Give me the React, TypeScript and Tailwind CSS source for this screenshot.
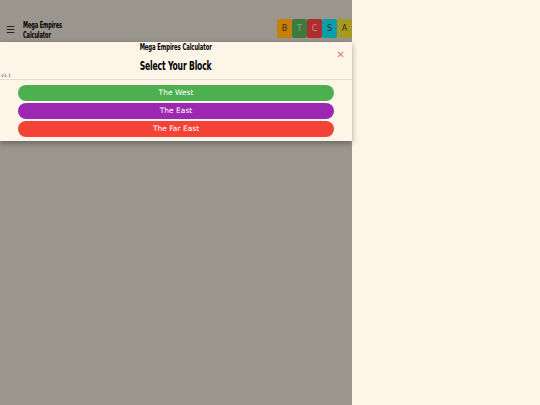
import React from "react";

const impact = {
  fontFamily: "Impact, 'Liberation Sans Narrow', 'DejaVu Sans Condensed', sans-serif",
  fontWeight: 700,
  letterSpacing: "-0.02em",
};

export default function App() {
  const badges = [
    { l: "B", bg: "bg-[#c5800c]", t: "text-[#3a2a10]" },
    { l: "T", bg: "bg-[#3c7a3d]", t: "text-[#7fa880]" },
    { l: "C", bg: "bg-[#ad2e2c]", t: "text-[#d98a86]" },
    { l: "S", bg: "bg-[#0d9fa9]", t: "text-[#0f2f33]" },
    { l: "A", bg: "bg-[#a69b22]", t: "text-[#2f2c10]" },
  ];
  const blocks = [
    { n: "The West", bg: "bg-[#4caf50]" },
    { n: "The East", bg: "bg-[#9c27b0]" },
    { n: "The Far East", bg: "bg-[#f44336]" },
  ];
  return (
    <div className="min-h-[405px] w-[540px] bg-[#fdf5e8]" style={{ fontFamily: "'DejaVu Sans', sans-serif" }}>
      <div className="relative h-[405px] w-[352px] bg-[#9a958d]">
        <header className="flex h-[42px] items-end justify-between pb-[2px]">
          <div className="flex items-center gap-[8px] pl-[6px]">
            <span className="mb-[1px] text-[10px] leading-none text-[#222]">☰</span>
            <div className="origin-left scale-x-[0.66] text-[8.5px] leading-[10px] text-black" style={impact}>
              <div>Mega Empires</div>
              <div>Calculator</div>
            </div>
          </div>
          <div className="mb-[2px] flex">
            {badges.map((b) => (
              <div
                key={b.l}
                className={`flex h-[19px] w-[15px] items-center justify-center rounded-[2px] text-[8px] ${b.bg} ${b.t}`}
              >
                {b.l}
              </div>
            ))}
          </div>
        </header>
        <div className="absolute left-0 top-[42px] w-[352px] bg-[#fdf5e8] shadow-[0_2px_6px_rgba(0,0,0,0.35)]">
          <div className="relative flex flex-col items-center border-b border-[#e2dcd2] pb-[1px]">
            <div className="scale-x-[0.74] text-[8px] leading-[12px] text-black" style={impact}>Mega Empires Calculator</div>
            <div className="mt-[5px] scale-x-[0.71] text-[12px] leading-[14px] text-black" style={impact}>Select Your Block</div>
            <div className="self-start pl-[1px] text-[4.5px] leading-[5px] text-[#444]">v1.1</div>
            <button className="absolute right-[7px] top-[8px] text-[10px] leading-none text-[#e57373]">✕</button>
          </div>
          <div className="flex flex-col gap-[2px] px-[18px] pt-[5px] pb-[4px]">
            {blocks.map((b) => (
              <button
                key={b.n}
                className={`flex h-[16px] items-center justify-center rounded-[8px] text-[7.5px] font-normal text-white ${b.bg}`}
              >
                {b.n}
              </button>
            ))}
          </div>
        </div>
      </div>
    </div>
  );
}
